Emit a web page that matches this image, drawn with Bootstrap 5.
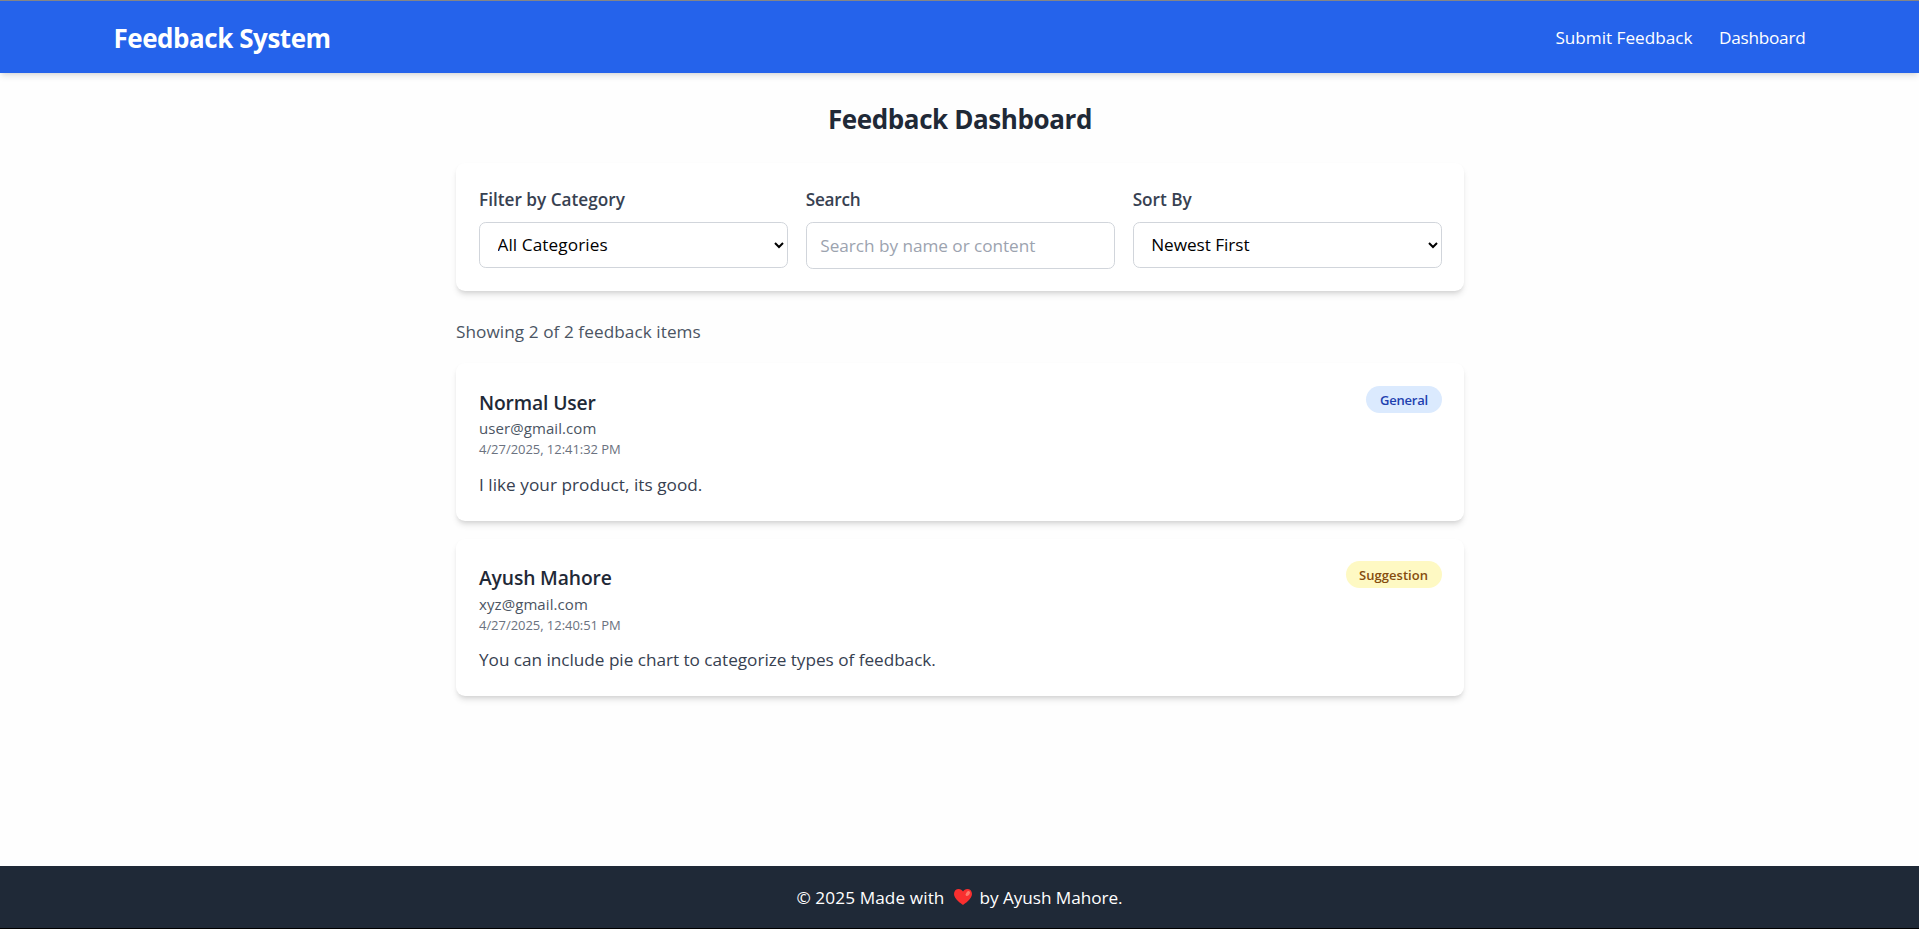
<!DOCTYPE html>
<html lang="en">
<head>
<meta charset="utf-8">
<meta name="viewport" content="width=device-width, initial-scale=1">
<title>Feedback System</title>
<link href="https://cdn.jsdelivr.net/npm/bootstrap@5.3.0/dist/css/bootstrap.min.css" rel="stylesheet">
<style>
  body{font-family:"Open Sans","Noto Sans",sans-serif;font-size:17.2px;line-height:27px;background:#fefefe;color:#374151;height:929px;overflow:hidden}
  .topbar{height:73px;background:#2563eb;border-top:1px solid #858585}
  .raised{box-shadow:0 4.5px 6.75px -1px rgba(0,0,0,.1),0 2.25px 4.5px -2px rgba(0,0,0,.1)}
  .wrap{max-width:1728px;padding:0 18px}
  .brand{font-size:26px;font-weight:700;line-height:36px;letter-spacing:-.46px;padding-top:2px}
  .links{gap:26.5px}
  .page{width:1009px;padding:27px 0 0 1px}
  .title{font-size:26px;font-weight:700;line-height:36px;letter-spacing:-.4px;color:#1f2937;margin-bottom:27px;padding-top:1px;height:36px}
  .panel{background:#fff;border-radius:9px;padding:22.5px 22.5px 22.5px 23px}
  .filters{display:grid;grid-template-columns:repeat(3,1fr);gap:18px;height:128px;margin-bottom:27px}
  .filters label{display:block;font-weight:600;margin-bottom:9px;height:27px}
  .field{display:block;width:100%;height:46px;border:1px solid #d1d5db;border-radius:6.75px;background:#fff;color:#000;padding:0 13.5px}
  input.field{height:47px}
  .field::placeholder{color:#9ca3af;opacity:1;letter-spacing:-.04px}
  .count{color:#4b5563;margin-bottom:18px;height:27px;letter-spacing:.06px}
  .item{height:157.5px;margin-bottom:18px}
  .name{font-size:19.3px;font-weight:600;line-height:31.5px;color:#1f2937;margin:0;letter-spacing:-.14px;padding-top:1px;height:31.5px}
  .mail{font-size:15px;line-height:22.5px;color:#4b5563;margin:0;letter-spacing:.08px}
  .date{font-size:13px;line-height:18px;color:#6b7280;margin:0 0 13px;padding-top:.5px;height:18px;letter-spacing:-.04px}
  .pill{font-size:13px;font-weight:600;line-height:18px;padding:5px 13.5px 4px;border-radius:20px}
  .general{background:#dbeafe;color:#1e40af;letter-spacing:-.2px}
  .suggestion{background:#fef9c3;color:#854d0e;letter-spacing:.03px}
  .foot{height:63px;background:#1f2937;border-bottom:1px solid #000;color:#fff}
  .heart{width:18px;height:16px;margin:0 8px 0 9px}
</style>
</head>
<body class="d-flex flex-column">
<header class="topbar raised flex-shrink-0">
  <div class="wrap mx-auto h-100 d-flex align-items-center justify-content-between text-white">
    <div class="brand">Feedback System</div>
    <nav class="links d-flex">
      <a class="text-white text-decoration-none" style="letter-spacing:-.02px">Submit Feedback</a>
      <a class="text-white text-decoration-none" style="letter-spacing:-.24px">Dashboard</a>
    </nav>
  </div>
</header>
<main class="page mx-auto flex-grow-1">
  <h1 class="title text-center">Feedback Dashboard</h1>
  <section class="panel raised filters">
    <div>
      <label for="cat">Filter by Category</label>
      <select id="cat" class="field" style="letter-spacing:.08px"><option>All Categories</option></select>
    </div>
    <div>
      <label for="q" style="letter-spacing:-.28px">Search</label>
      <input id="q" class="field" placeholder="Search by name or content">
    </div>
    <div>
      <label for="sort">Sort By</label>
      <select id="sort" class="field" style="letter-spacing:-.04px"><option>Newest First</option></select>
    </div>
  </section>
  <p class="count">Showing 2 of 2 feedback items</p>
  <article class="panel raised item">
    <div class="d-flex justify-content-between align-items-start">
      <div>
        <h2 class="name">Normal User</h2>
        <p class="mail">user@gmail.com</p>
        <p class="date">4/27/2025, 12:41:32 PM</p>
      </div>
      <span class="pill general">General</span>
    </div>
    <p class="m-0" style="letter-spacing:.03px">I like your product, its good.</p>
  </article>
  <article class="panel raised item">
    <div class="d-flex justify-content-between align-items-start">
      <div>
        <h2 class="name">Ayush Mahore</h2>
        <p class="mail">xyz@gmail.com</p>
        <p class="date">4/27/2025, 12:40:51 PM</p>
      </div>
      <span class="pill suggestion">Suggestion</span>
    </div>
    <p class="m-0" style="letter-spacing:-.03px">You can include pie chart to categorize types of feedback.</p>
  </article>
</main>
<footer class="foot flex-shrink-0 d-flex align-items-center justify-content-center">
  <span style="letter-spacing:.1px">© 2025 Made with</span>
  <svg class="heart" viewBox="0 0 18 16" aria-hidden="true">
    <path d="M9 16C7 14.3 0 9.8 0 4.9 0 2 2 0 4.7 0 6.5 0 8.1.9 9 2.4 9.9.9 11.5 0 13.300 0 16 0 18 2 18 4.900 18 9.800 11 14.300 9 16Z" fill="#f92f2f"/>
    <ellipse cx="13.8" cy="4.6" rx="2.8" ry="1.7" transform="rotate(-50 13.8 4.6)" fill="#fb7a6c"/>
  </svg>
  <span style="letter-spacing:-.05px">by Ayush Mahore.</span>
</footer>
<script src="https://cdn.jsdelivr.net/npm/bootstrap@5.3.0/dist/js/bootstrap.bundle.min.js"></script>
</body>
</html>
